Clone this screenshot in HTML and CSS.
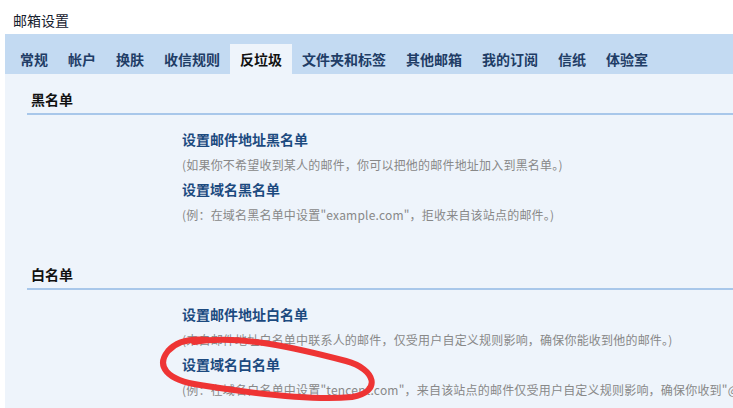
FILE: index.html
```html
<!DOCTYPE html>
<html lang="zh-CN">
<head>
<meta charset="utf-8">
<title>邮箱设置</title>
<link rel="stylesheet" href="styles.css">
</head>
<body>
<div class="page">
  <div class="title">邮箱设置</div>
  <div class="tabs">
    <span class="tab">常规</span>
    <span class="tab">帐户</span>
    <span class="tab">换肤</span>
    <span class="tab">收信规则</span>
    <span class="tab active">反垃圾</span>
    <span class="tab">文件夹和标签</span>
    <span class="tab">其他邮箱</span>
    <span class="tab">我的订阅</span>
    <span class="tab">信纸</span>
    <span class="tab">体验室</span>
  </div>
  <div class="content">
    <div class="section">
      <div class="heading">黑名单</div>
      <div class="items">
        <div class="item-title">设置邮件地址黑名单</div>
        <div class="item-desc">(如果你不希望收到某人的邮件，你可以把他的邮件地址加入到黑名单。)</div>
        <div class="item-title">设置域名黑名单</div>
        <div class="item-desc">(例：在域名黑名单中设置"example.com"，拒收来自该站点的邮件。)</div>
      </div>
    </div>
    <div class="section second">
      <div class="heading">白名单</div>
      <div class="items">
        <div class="item-title">设置邮件地址白名单</div>
        <div class="item-desc">(来自邮件地址白名单中联系人的邮件，仅受用户自定义规则影响，确保你能收到他的邮件。)</div>
        <div class="item-title">设置域名白名单</div>
        <div class="item-desc">(例：在域名白名单中设置"tencent.com"，来自该站点的邮件仅受用户自定义规则影响，确保你收到"@tencent.com"的邮件。)</div>
      </div>
    </div>
  </div>
  <svg class="scribble" width="733" height="408" viewBox="0 0 733 408">
    <path d="M 194 342 C 240 334, 300 349, 346 361 C 376 369, 382 392, 352 397 C 310 401, 250 393, 200 385 C 166 380, 156 366, 168 351 C 176 342, 188 338, 208 340" fill="none" stroke="#ee3434" stroke-width="6" stroke-linecap="round" stroke-linejoin="round"/>
  </svg>
</div>
</body>
</html>
```

FILE: styles.css
```css
html, body {
  margin: 0;
  padding: 0;
  background: #ffffff;
  overflow: hidden;
}

.page {
  position: relative;
  width: 733px;
  height: 408px;
  overflow: hidden;
  font-family: "Noto Sans CJK SC", "Microsoft YaHei", sans-serif;
}

.title {
  padding: 13px 0 0 13px;
  height: 21px;
  line-height: 14px;
  font-size: 14px;
  color: #15202e;
}

.tabs {
  margin-left: 5px;
  padding-left: 5px;
  height: 40px;
  background: #c3daf2;
  display: flex;
  align-items: flex-end;
}

.tab {
  padding: 0 10px;
  height: 30px;
  line-height: 30px;
  font-size: 14px;
  font-weight: bold;
  color: #1f3d66;
  white-space: nowrap;
}

.tab.active {
  background: #eef4fb;
  color: #111111;
}

.content {
  margin-left: 5px;
  background: #eef4fb;
  height: 334px;
}

.section {
  padding-left: 22px;
}

.section.second {
  margin-top: 22px;
}

.heading {
  padding: 13px 4px 2px;
  line-height: 24px;
  font-size: 14px;
  font-weight: bold;
  color: #111111;
  border-bottom: 2px solid #a8c7ea;
}

.items {
  padding: 12px 0 0 155px;
}

.item-title {
  line-height: 25px;
  font-size: 14px;
  font-weight: bold;
  color: #1c4a7f;
  white-space: nowrap;
}

.item-desc {
  line-height: 25px;
  font-size: 12px;
  letter-spacing: 0.2px;
  color: #888888;
  white-space: nowrap;
}

.scribble {
  position: absolute;
  left: 0;
  top: 0;
  pointer-events: none;
}
```
